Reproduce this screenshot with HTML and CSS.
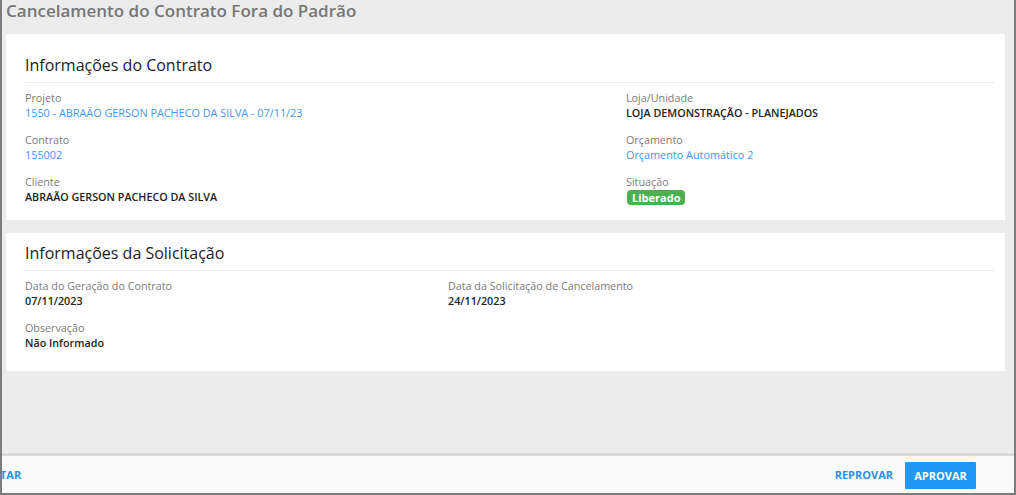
FILE: index.html
```html
<!DOCTYPE html>
<html lang="pt-BR">
<head>
<meta charset="utf-8">
<link rel="stylesheet" href="styles.css">
</head>
<body>
<div class="frame">
  <main class="main">
    <h1 class="title">Cancelamento do Contrato Fora do Padrão</h1>
    <section class="card">
      <h2 class="card-title">Informações do Contrato</h2>
      <div class="grid grid-contrato">
        <div class="col">
          <div class="field">
            <div class="label">Projeto</div>
            <div class="value link">1550 - ABRAÃO GERSON PACHECO DA SILVA - 07/11/23</div>
          </div>
          <div class="field">
            <div class="label">Contrato</div>
            <div class="value link">155002</div>
          </div>
          <div class="field">
            <div class="label">Cliente</div>
            <div class="value strong">ABRAÃO GERSON PACHECO DA SILVA</div>
          </div>
        </div>
        <div class="col">
          <div class="field">
            <div class="label">Loja/Unidade</div>
            <div class="value strong">LOJA DEMONSTRAÇÃO - PLANEJADOS</div>
          </div>
          <div class="field">
            <div class="label">Orçamento</div>
            <div class="value link">Orçamento Automático 2</div>
          </div>
          <div class="field">
            <div class="label">Situação</div>
            <div class="value"><span class="badge">Liberado</span></div>
          </div>
        </div>
      </div>
    </section>
    <section class="card card-2">
      <h2 class="card-title">Informações da Solicitação</h2>
      <div class="grid grid-sol">
        <div class="field">
          <div class="label">Data do Geração do Contrato</div>
          <div class="value strong">07/11/2023</div>
        </div>
        <div class="field">
          <div class="label">Data da Solicitação de Cancelamento</div>
          <div class="value strong">24/11/2023</div>
        </div>
        <div class="field">
          <div class="label">Observação</div>
          <div class="value strong">Não Informado</div>
        </div>
      </div>
    </section>
  </main>
  <footer class="footer">
    <button class="btn-text btn-left">TAR</button>
    <div class="actions">
      <button class="btn-text">REPROVAR</button>
      <button class="btn-primary">APROVAR</button>
    </div>
  </footer>
</div>
</body>
</html>
```

FILE: styles.css
```css
* { box-sizing: border-box; }
html, body { margin: 0; padding: 0; }
body {
  font-family: "Open Sans", "Noto Sans", sans-serif;
  background: #ececec;
}
.frame {
  width: 1016px;
  height: 495px;
  border-left: 2px solid #7c7c7c;
  border-right: 2px solid #7c7c7c;
  border-bottom: 2px solid #7c7c7c;
  background: #ececec;
  display: flex;
  flex-direction: column;
  overflow: hidden;
}
.main {
  flex: 1;
  padding: 0 9px 0 4px;
}
.title {
  margin: 0;
  font-size: 17px;
  font-weight: 600;
  color: #777;
  line-height: 24px;
  margin-top: -1px;
}
.card {
  background: #fff;
  margin-top: 11px;
  padding: 20px 11px 14px 19px;
}
.card-2 { margin-top: 13px; padding-top: 9px; padding-bottom: 20px; }
.card-title {
  margin: 0;
  font-size: 16px;
  font-weight: 400;
  color: #1c1c1c;
  line-height: 22px;
  padding-bottom: 6px;
  border-bottom: 1px solid #ececec;
  margin-bottom: 8px;
}
.grid { display: grid; }
.grid-contrato { grid-template-columns: 601px 1fr; }
.grid-sol { grid-template-columns: 423px 1fr; row-gap: 12px; }
.col { display: flex; flex-direction: column; gap: 12px; }
.field { display: flex; flex-direction: column; }
.label {
  font-size: 10.75px;
  color: #7b7b7b;
  line-height: 14px;
}
.value {
  font-size: 10.75px;
  line-height: 16px;
  color: #222;
}
.value.link { color: #4198ea; font-size: 10.85px; }
.value.strong { font-weight: 600; color: #222; }
.badge {
  display: inline-block;
  background: #4caf50;
  color: #fff;
  font-weight: 700;
  font-size: 11px;
  line-height: 15px;
  padding: 0 5px;
  border-radius: 4px;
  margin-left: 1px;
  margin-top: 1px;
}
.footer {
  height: 38px;
  background: #fafafa;
  box-shadow: 0 -1px 2px rgba(0,0,0,0.15);
  border-top: 1px solid #dcdcdc;
  display: flex;
  align-items: center;
  justify-content: space-between;
  padding: 0 38px 0 0;
}
.actions { display: flex; align-items: center; gap: 12px; }
button {
  font-family: "Open Sans", "Noto Sans", sans-serif;
  font-weight: 700;
  font-size: 11px;
  border: none;
  cursor: pointer;
}
.btn-text {
  background: transparent;
  color: #2b8fe6;
  padding: 0;
}
.btn-left { margin-left: -2px; }
.btn-primary {
  background: #2196f3;
  color: #fff;
  height: 27px;
  width: 71px;
  padding: 0;
  border-radius: 1px;
  margin-top: 1px;
}
```
